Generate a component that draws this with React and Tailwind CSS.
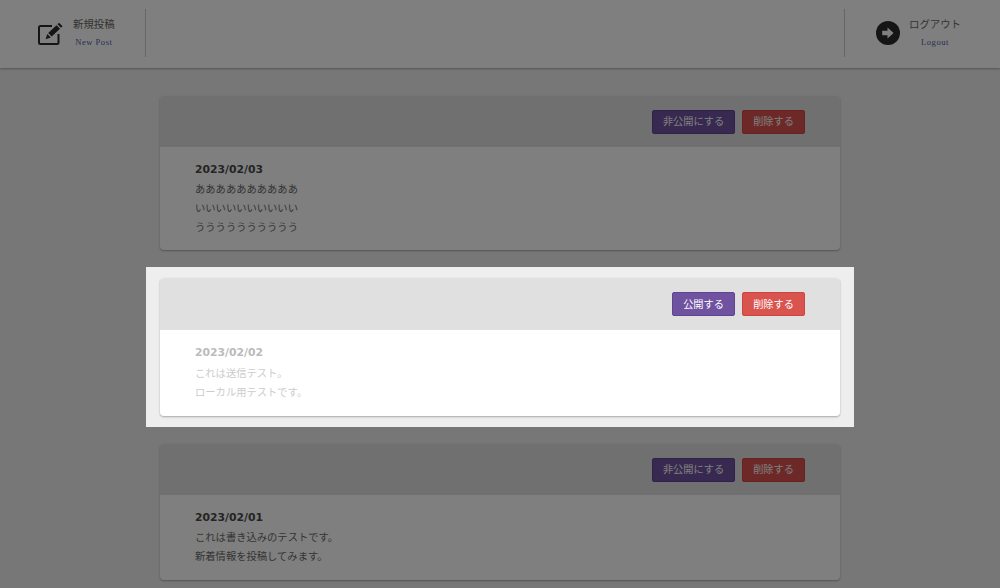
import React from "react";

const jp = "font-['Noto_Sans_CJK_JP','Liberation_Sans',sans-serif]";

const posts = [
  { date: "2023/02/03", lines: ["ああああああああああ", "いいいいいいいいいい", "うううううううううう"], published: true },
  { date: "2023/02/02", lines: ["これは送信テスト。", "ローカル用テストです。"], published: false },
  { date: "2023/02/01", lines: ["これは書き込みのテストです。", "新着情報を投稿してみます。"], published: true },
];

const EditIcon = () => (
  <svg viewBox="0 0 25 23" className="w-[25px] h-[23px] mr-[10px] text-[#2a2a2a]" fill="currentColor">
    <path
      d="M14 4H2.5A1.5 1.5 0 0 0 1 5.500V20.500A1.500 1.500 0 0 0 2.500 22H19A1.500 1.500 0 0 0 20.500 20.500V12"
      fill="none"
      stroke="currentColor"
      strokeWidth="2"
    />
    <polygon points="10.200,11 18.500,3.200 22,6.800 13.700,14.600" />
    <polygon points="9.300,12 12.800,15.600 7.600,17.200" />
    <polygon points="19.500,2.200 21,0.800 24.500,4.200 23,5.800" />
  </svg>
);

const LogoutIcon = () => (
  <svg viewBox="0 0 24 24" className="w-[24px] h-[24px] mr-[9px]">
    <circle cx="12" cy="12" r="12" fill="#2a2a2a" />
    <polygon points="6.200,9.700 11.500,9.700 11.500,6.600 17.600,12 11.500,17.400 11.500,14.300 6.200,14.300" fill="#fff" />
  </svg>
);

const Button = ({ className, children }) => (
  <button
    type="button"
    className={`h-[24px] rounded-[2px] border text-[10.2px] leading-none text-white ${className}`}
  >
    {children}
  </button>
);

const PostCard = ({ post }) => (
  <div className="rounded-[4px] bg-white shadow-[0_1px_2px_rgba(0,0,0,0.3)] overflow-hidden">
    <div
      className={`bg-[#e0e0e0] flex items-center justify-end gap-[7px] pr-[35px] ${
        post.published ? "h-[51px]" : "h-[52px]"
      }`}
    >
      {post.published ? (
        <Button className="w-[83px] bg-[#6f52a0] border-[#5f4590]">非公開にする</Button>
      ) : (
        <Button className="w-[63px] bg-[#6f52a0] border-[#5f4590]">公開する</Button>
      )}
      <Button className="w-[63px] bg-[#d9534f] border-[#d0443f]">削除する</Button>
    </div>
    <div className={`pl-[35px] pt-[13px] ${post.lines.length === 2 ? "pb-[15px]" : "pb-[14px]"}`}>
      <p
        className={`font-['DejaVu_Sans',sans-serif] font-bold text-[10.8px] leading-[19px] ${
          post.published ? "text-[#4a4a4a]" : "text-[#bbb] mb-px"
        }`}
      >
        {post.date}
      </p>
      {post.lines.map((line) => (
        <p
          key={line}
          className={`text-[10.3px] leading-[19px] ${post.published ? "text-[#6a6a6a]" : "text-[#ccc]"}`}
        >
          {line}
        </p>
      ))}
    </div>
  </div>
);

const NavItem = ({ icon, title, sub }) => (
  <div className="flex items-center">
    {icon}
    <div className="flex flex-col items-center pb-[2px]">
      <span className="text-[10.4px] leading-[16px] text-[#666]">{title}</span>
      <span className="font-['Liberation_Serif',serif] text-[8.6px] leading-[12px] tracking-[0.5px] mt-[4px] text-[#4f5fa8]">
        {sub}
      </span>
    </div>
  </div>
);

export default function App() {
  return (
    <div className={`relative h-[588px] overflow-hidden bg-[#eee] ${jp}`}>
      <header className="h-[68px] bg-white flex justify-between items-center shadow-[0_1px_2px_rgba(0,0,0,0.3)]">
        <div className="h-[48px] w-[146px] -mt-[2px] border-r border-[#ccc] pl-[38px] flex items-center">
          <NavItem icon={<EditIcon />} title="新規投稿" sub="New Post" />
        </div>
        <div className="h-[48px] w-[156px] -mt-[2px] border-l border-[#ccc] pl-[31px] flex items-center">
          <NavItem icon={<LogoutIcon />} title="ログアウト" sub="Logout" />
        </div>
      </header>

      <main className="w-[680px] mx-auto mt-[28px] flex flex-col gap-[28px]">
        {posts.map((post) =>
          post.published ? (
            <PostCard key={post.date} post={post} />
          ) : (
            <div key={post.date} className="relative z-10 -mx-[14px] -my-[11px] px-[14px] py-[11px] bg-[#eee]">
              <PostCard post={post} />
            </div>
          )
        )}
      </main>

      <div className="absolute inset-0 bg-black/50" />
    </div>
  );
}
